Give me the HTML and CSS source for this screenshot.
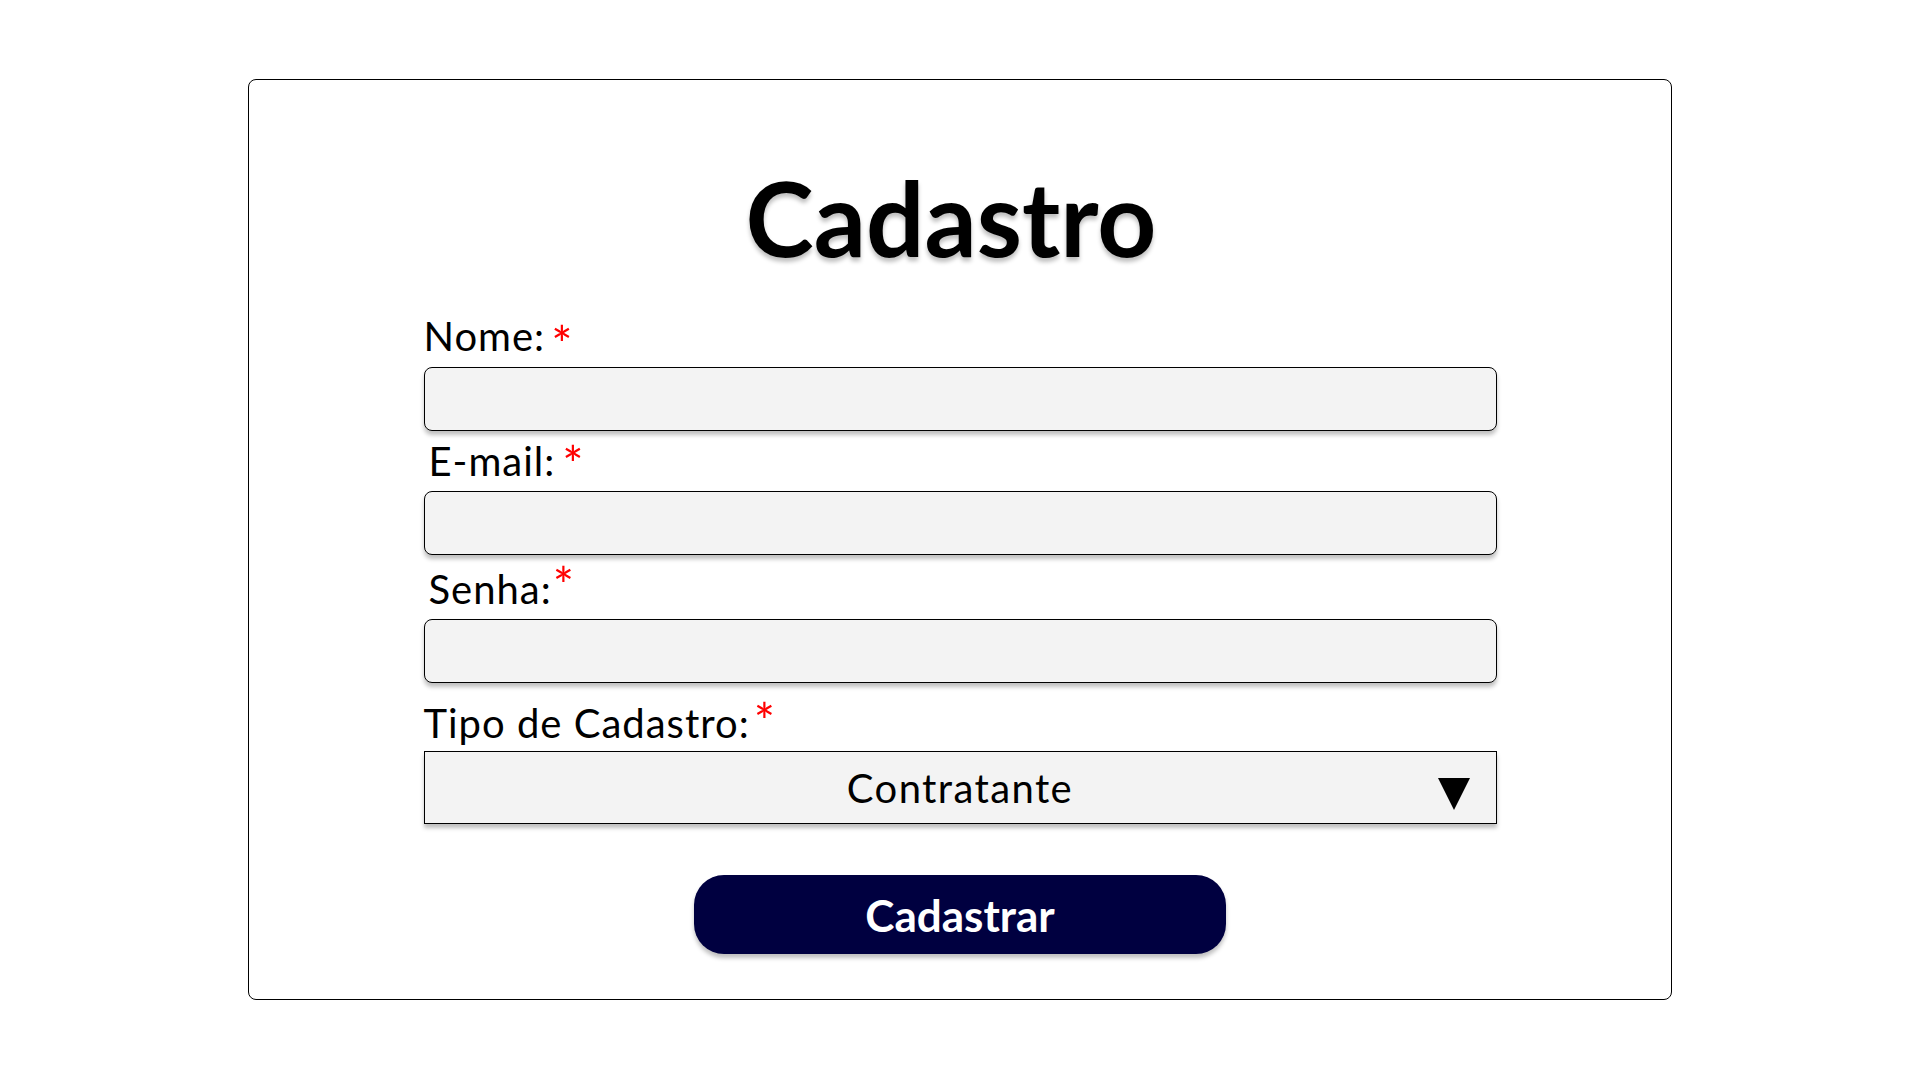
FILE: index.html
```html
<!DOCTYPE html>
<html lang="pt-BR">
<head>
<meta charset="utf-8">
<title>Cadastro</title>
<link rel="stylesheet" href="styles.css">
</head>
<body>
<main class="card">
  <h1 class="title">Cadastro</h1>
  <form class="form">
    <label class="label label-nome" for="nome">Nome:<span class="req req-nome">*</span></label>
    <input class="field" id="nome" type="text">

    <label class="label label-email" for="email">E-mail:<span class="req req-email">*</span></label>
    <input class="field" id="email" type="email">

    <label class="label label-senha" for="senha">Senha:<span class="req req-senha">*</span></label>
    <input class="field" id="senha" type="password">

    <label class="label label-tipo" for="tipo">Tipo de Cadastro:<span class="req req-tipo">*</span></label>
    <div class="select-wrap">
      <select class="select" id="tipo">
        <option>Contratante</option>
        <option>Prestador</option>
      </select>
      <svg class="arrow" width="32" height="32" viewBox="0 0 32 32" aria-hidden="true"><polygon points="0,0 32,0 16,32" fill="#000"/></svg>
    </div>

    <div class="actions">
      <button class="btn" type="button">Cadastrar</button>
    </div>
  </form>
</main>
</body>
</html>
```

FILE: styles.css
```css
html, body {
  margin: 0;
  padding: 0;
  background: #ffffff;
}

body {
  font-family: "Lato", "Liberation Sans", sans-serif;
  color: #000;
}

.card {
  box-sizing: border-box;
  width: 1424px;
  height: 921px;
  margin: 79px auto 0;
  border: 1px solid #000;
  border-radius: 8px;
  padding-top: 86px;
  display: flex;
  flex-direction: column;
  align-items: center;
}

.title {
  margin: 0 18px 0 0;
  font-size: 103px;
  line-height: 103px;
  font-weight: 700;
  letter-spacing: 0;
  text-shadow: 0 4px 4px rgba(0, 0, 0, 0.25);
}

.form {
  width: 1073px;
  display: flex;
  flex-direction: column;
}

.label {
  font-size: 40px;
  line-height: 48px;
  font-weight: 400;
  letter-spacing: 1px;
}

.label-nome { margin-top: 43px; margin-bottom: 7px; }
.label-email { margin-top: 6px; margin-bottom: 6px; padding-left: 5px; }
.label-senha { margin-top: 10px; margin-bottom: 6px; padding-left: 5px; }
.label-tipo { margin-top: 16px; margin-bottom: 4px; }

.req {
  color: #ff0000;
  font-size: 50px;
  line-height: 0;
  position: relative;
  letter-spacing: 0;
}

.req-nome { margin-left: 6px; top: 12px; }
.req-email { margin-left: 7px; top: 7px; }
.req-senha { margin-left: 1px; top: 0; }
.req-tipo { margin-left: 4px; top: 2px; }

.field {
  box-sizing: border-box;
  width: 100%;
  height: 64px;
  margin: 0;
  border: 1.5px solid #000;
  border-radius: 8px;
  background: #f3f3f3;
  box-shadow: 0 4px 4px rgba(0, 0, 0, 0.25);
  font-family: inherit;
  font-size: 32px;
  padding: 0 16px;
  outline: none;
}

.select-wrap {
  position: relative;
  height: 73px;
}

.select {
  box-sizing: border-box;
  width: 100%;
  height: 73px;
  margin: 0;
  border: 1.5px solid #000;
  border-radius: 0;
  background: #f3f3f3;
  box-shadow: 0 4px 4px rgba(0, 0, 0, 0.25);
  font-family: inherit;
  font-size: 40px;
  letter-spacing: 1.4px;
  color: #000;
  text-align: center;
  text-align-last: center;
  appearance: none;
  -webkit-appearance: none;
  padding: 0 60px;
  outline: none;
}

.arrow {
  position: absolute;
  right: 27px;
  top: 27px;
  pointer-events: none;
}

.actions {
  display: flex;
  justify-content: center;
  margin-top: 51px;
}

.btn {
  width: 532px;
  height: 79px;
  border: none;
  border-radius: 30px;
  background: #000040;
  color: #fff;
  font-family: inherit;
  font-size: 44px;
  font-weight: 700;
  box-shadow: 0 4px 4px rgba(0, 0, 0, 0.25);
  cursor: pointer;
}
```
